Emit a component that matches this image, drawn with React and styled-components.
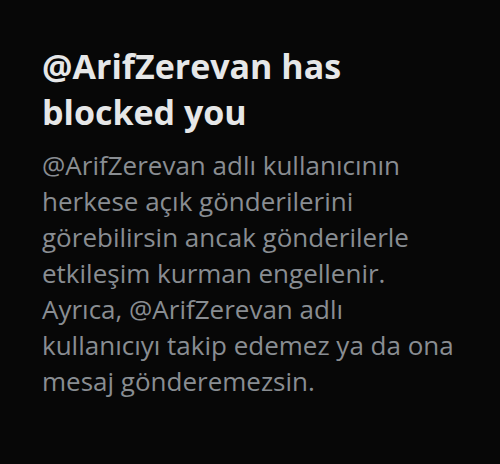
import React from "react";
import styled, { createGlobalStyle } from "styled-components";

const Global = createGlobalStyle`
  html, body {
    margin: 0;
    padding: 0;
    background: #070707;
  }
`;

const App = () => {
  return (
    <>
      <Global />
      <Styles.Page>
        <Styles.Card>
          <Styles.Title>
            @ArifZerevan has
            <br />
            blocked you
          </Styles.Title>
          <Styles.Body>
            @ArifZerevan adlı kullanıcının
            <br />
            herkese açık gönderilerini
            <br />
            görebilirsin ancak gönderilerle
            <br />
            etkileşim kurman engellenir.
            <br />
            Ayrıca, @ArifZerevan adlı
            <br />
            kullanıcıyı takip edemez ya da ona
            <br />
            mesaj gönderemezsin.
          </Styles.Body>
        </Styles.Card>
      </Styles.Page>
    </>
  );
};

// styled
const Styles = {
  Page: styled.div`
    width: 500px;
    height: 464px;
    background: #070707;
    box-sizing: border-box;
    padding: 43px 0 0 42px;
    overflow: hidden;
  `,
  Card: styled.div`
    display: flex;
    flex-direction: column;
    gap: 12px;
  `,
  Title: styled.h1`
    margin: 0;
    font-family: "Open Sans", "Noto Sans", sans-serif;
    font-weight: 700;
    font-size: 34px;
    line-height: 46px;
    color: #e6e7e8;
    white-space: nowrap;
  `,
  Body: styled.p`
    margin: 0;
    font-family: "Open Sans", "Noto Sans", sans-serif;
    font-weight: 400;
    font-size: 26px;
    line-height: 36px;
    color: #898d92;
    white-space: nowrap;
  `,
};

export default App;
